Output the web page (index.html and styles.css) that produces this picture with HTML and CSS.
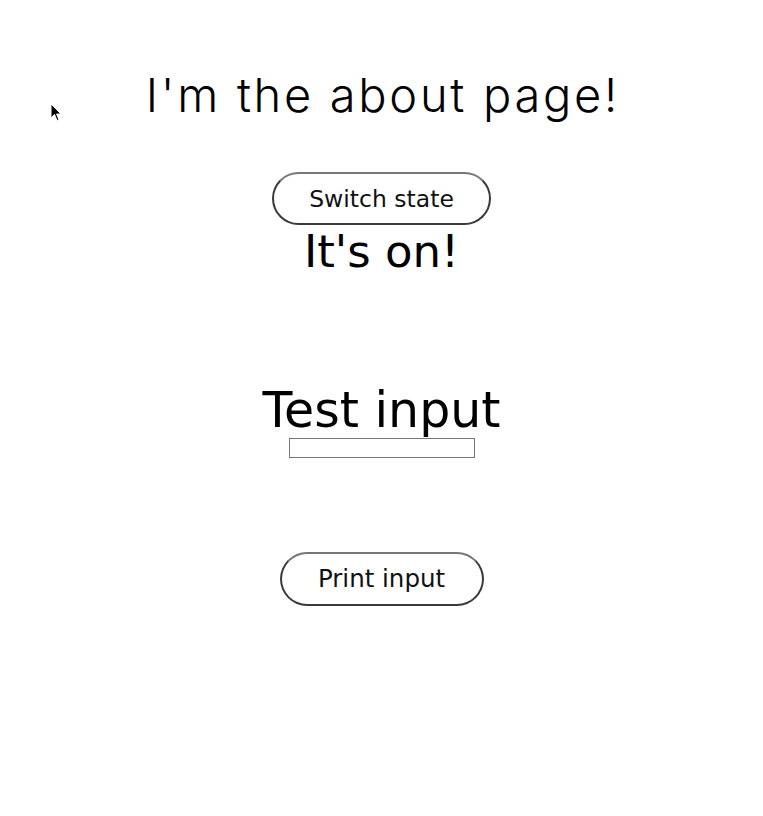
FILE: index.html
```html
<!DOCTYPE html>
<html>
<head>
<meta charset="utf-8">
<link rel="stylesheet" href="styles.css">
</head>
<body>
<main class="page">
  <h1 class="title">I'm the about page!</h1>
  <button class="pill pill-switch">Switch state</button>
  <h2 class="state">It's on!</h2>
  <h2 class="label">Test input</h2>
  <input class="field" type="text">
  <button class="pill pill-print">Print input</button>
</main>
<svg class="cursor" width="12" height="20" viewBox="0 0 12 20"><path d="M1 1 L1 15 L4.5 11.5 L7 17.5 L9 16.6 L6.6 11 L11 11 Z" fill="#000" stroke="#fff" stroke-width="1"/></svg>
</body>
</html>
```
FILE: styles.css
```css
html, body {
  margin: 0;
  padding: 0;
  background: #fff;
}
body {
  width: 763px;
  min-height: 816px;
  font-family: "DejaVu Sans", sans-serif;
  color: #000;
}
.page {
  display: flex;
  flex-direction: column;
  align-items: center;
  text-align: center;
}
.title {
  margin: 67px 0 0;
  padding-left: 2.7px;
  font-family: Inter, sans-serif;
  font-weight: 300;
  font-size: 47px;
  letter-spacing: 2.7px;
  line-height: 56px;
}
.pill {
  margin-top: 49px;
  font-family: "DejaVu Sans", sans-serif;
  font-size: 23px;
  line-height: 24px;
  background: #fff;
  color: #111;
  border: 2px solid #3a3a3a;
  border-top-color: #777;
  border-radius: 30px;
  padding: 0;
  box-sizing: border-box;
}
.pill-switch { width: 219px; height: 53px; font-size: 23.5px; }
.pill-print { width: 204px; height: 54px; margin-top: 94px; font-size: 24.5px; }
.state {
  margin: 2px 0 0;
  font-weight: 400;
  font-size: 45px;
  line-height: 50px;
}
.label {
  margin: 106px 0 0;
  font-weight: 400;
  font-size: 49px;
  line-height: 56px;
}
.field {
  margin-top: -1px;
  width: 186px;
  height: 20px;
  box-sizing: border-box;
  border: 1px solid #767676;
  padding: 0;
}
.cursor {
  position: absolute;
  left: 50px;
  top: 103px;
}
```
